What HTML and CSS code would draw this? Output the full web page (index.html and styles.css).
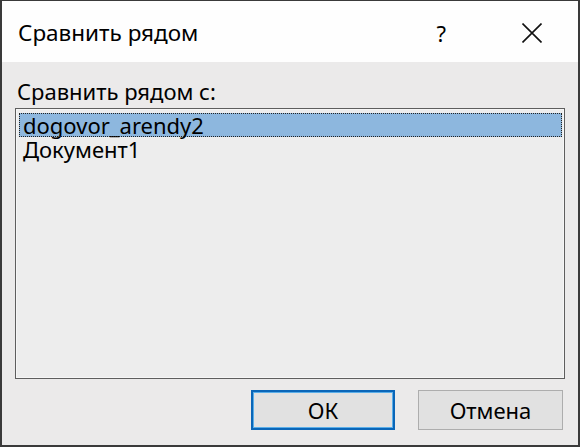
FILE: index.html
```html
<!DOCTYPE html>
<html lang="ru">
<head>
<meta charset="utf-8">
<link rel="stylesheet" href="styles.css">
</head>
<body>
<div class="window">
  <div class="titlebar">
    <span class="title">Сравнить рядом</span>
    <span class="help">?</span>
    <svg class="close" width="20" height="20" viewBox="0 0 20 20"><path d="M0.5 0.5 L19.5 19.5 M19.5 0.5 L0.5 19.5" stroke="#111" stroke-width="1.6" fill="none"/></svg>
  </div>
  <div class="content">
    <div class="label">Сравнить рядом с:</div>
    <div class="listbox">
      <div class="item selected">dogovor_arendy2</div>
      <div class="item">Документ1</div>
    </div>
    <div class="buttons">
      <div class="btn default">ОК</div>
      <div class="btn">Отмена</div>
    </div>
  </div>
</div>
</body>
</html>
```
FILE: styles.css
```css
html, body {
  margin: 0;
  padding: 0;
}
body {
  width: 580px;
  height: 448px;
  overflow: hidden;
  font-family: "Noto Sans", "Open Sans", sans-serif;
  color: #000;
}
.window {
  box-sizing: border-box;
  width: 580px;
  height: 447px;
  border: 1px solid #3a3a3a;
  border-left-width: 2px;
  border-right-width: 2px;
  border-bottom-width: 2px;
  background: #ebeaea;
  display: flex;
  flex-direction: column;
}
.titlebar {
  height: 61px;
  background: #fefefe;
  display: flex;
  align-items: center;
  padding-left: 16px;
  padding-right: 36px;
  flex-shrink: 0;
}
.title {
  font-size: 22.5px;
  flex: 1;
  position: relative;
  top: 1px;
}
.help {
  font-size: 22px;
  margin-right: 76px;
  position: relative;
  top: 1px;
}
.close {
  display: block;
  position: relative;
  top: 1px;
}
.content {
  padding: 0 13px 0 13px;
  display: flex;
  flex-direction: column;
}
.label {
  font-size: 22px;
  line-height: 28px;
  margin-top: 15px;
  padding-left: 2px;
}
.listbox {
  box-sizing: border-box;
  margin-top: 3px;
  height: 271px;
  border: 1px solid #5e5e5e;
  box-shadow: inset 0 0 0 1px #f6f6f6;
  background: #ededed;
  padding: 4px 2px 0 3px;
}
.item {
  height: 24px;
  line-height: 24px;
  font-size: 22px;
  padding-left: 4px;
  box-sizing: border-box;
}
.selected {
  background: #8db7de;
  outline: 1px dotted #222;
  outline-offset: -1px;
}
.buttons {
  display: flex;
  justify-content: flex-end;
  gap: 23px;
  margin-top: 11px;
  padding-right: 2px;
}
.btn {
  box-sizing: border-box;
  width: 145px;
  height: 40px;
  background: #e1e1e1;
  border: 1px solid #adadad;
  font-size: 22px;
  display: flex;
  align-items: center;
  justify-content: center;
}
.btn.default {
  width: 144px;
  border: 2px solid #0a66b8;
  box-shadow: inset 0 0 0 1px #5aaee8;
}
```
